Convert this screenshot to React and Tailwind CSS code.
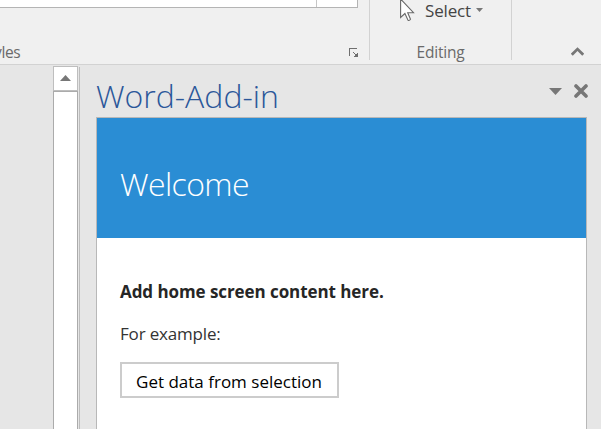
function Ribbon() {
  return (
    <header className="flex h-[65px] shrink-0 overflow-hidden border-b border-[#d2d2d2] bg-[#f0f0f0] text-[#6a6a6a]">
      <section className="flex w-[369px] flex-col">
        <div className="flex h-2 w-[358px] border-r border-b border-[#b4b4b4] bg-white">
          <div className="w-[317px] border-r border-[#c6c6c6]" />
        </div>
        <div className="mt-[33px] flex items-start justify-between pr-[10px]">
          <span className="-ml-[19px] text-[15.5px] leading-[22px] tracking-[-0.45px] whitespace-nowrap">Styles</span>
          <svg width="11" height="11" viewBox="0 0 11 11" className="mt-[7px] translate-x-px" fill="none" stroke="#6f6f6f" shapeRendering="crispEdges">
            <path d="M.5 8V.5H8" />
            <path d="M4 4l3.5 3.5" />
            <path d="M9 4v5H4z" fill="#6f6f6f" stroke="none" />
          </svg>
        </div>
      </section>
      <div className="h-[60px] w-px bg-[#d2d2d2]" />
      <section className="flex w-[141px] flex-col items-center">
        <div className="flex h-[22px] w-full items-start pl-[30px]">
          <svg width="15" height="22" viewBox="0 0 15 22" fill="#fff" stroke="#686868" strokeWidth="1.1">
            <path d="M.6-1V17.4L4.9 13.5 8 20.2Q9.4 21 10.5 19.3L7.7 12.7H13.5L.6-1Z" />
          </svg>
          <span className="ml-[10px] text-[17px] leading-[22px] tracking-[-0.15px] text-[#444]">Select</span>
          <svg width="7" height="4" viewBox="0 0 7 4" className="mt-2 ml-[5px]" fill="#777">
            <path d="M0 0h7L3.5 4z" />
          </svg>
        </div>
        <span className="mt-[19px] text-[15.5px] leading-[22px] tracking-[-0.2px]">Editing</span>
      </section>
      <div className="h-[60px] w-px bg-[#d2d2d2]" />
      <div className="flex flex-1 justify-end pr-[17px]">
        <svg width="13" height="9" viewBox="0 0 13 9" className="mt-[47px]" fill="none" stroke="#777" strokeWidth="2.8">
          <path d="M.8 7.7l5.7-5.6 5.7 5.6" />
        </svg>
      </div>
    </header>
  );
}

function Scrollbar() {
  return (
    <div className="mt-px flex w-[25px] flex-col">
      <div className="flex h-[25px] items-center justify-center border border-[#bebebe] bg-white">
        <svg width="11" height="6" viewBox="0 0 11 6" className="-mt-0.5" fill="#777">
          <path d="M5.5 0L11 6H0z" />
        </svg>
      </div>
      <div className="flex-1 border border-b-0 border-[#ababab] bg-white" />
    </div>
  );
}

function TaskPane() {
  return (
    <aside className="ml-4 flex w-[491px] flex-col">
      <div className="flex h-[52px] justify-between">
        <h1 className="mt-[9px] text-[32px] leading-[44px] font-light whitespace-nowrap text-[#2b579a]">Word-Add-in</h1>
        <div className="mt-[19px] -mr-px flex items-start">
          <svg width="13" height="7" viewBox="0 0 13 7" className="mt-1" fill="#777">
            <path d="M0 0h13L6.5 7z" />
          </svg>
          <svg width="14" height="14" viewBox="0 0 14 14" className="ml-3" fill="none" stroke="#777" strokeWidth="3.6" strokeLinecap="round">
            <path d="M2 2l10 10M12 2L2 12" />
          </svg>
        </div>
      </div>
      <div className="flex flex-1 flex-col border border-b-0 border-[#b8b8b8] bg-white">
        <div className="h-[120px] bg-[#2a8dd4] pt-[44px] pl-[23px]">
          <h2 className="text-[32px] leading-[44px] font-light tracking-[-0.6px] whitespace-nowrap text-white">Welcome</h2>
        </div>
        <main className="flex flex-col items-start pt-[42px] pl-[23px]">
          <p className="text-[17px] leading-6 font-bold tracking-[-0.07px] whitespace-nowrap text-[#262626]">Add home screen content here.</p>
          <p className="mt-[18px] text-[17px] leading-6 tracking-[-0.18px] whitespace-nowrap text-[#333]">For example:</p>
          <button className="mt-4 h-9 w-[219px] border-2 border-[#ccc] bg-white pt-[3px] pr-px text-[17px] leading-6 whitespace-nowrap text-black">
            Get data from selection
          </button>
        </main>
      </div>
    </aside>
  );
}

export default function App() {
  return (
    <div className="flex h-[429px] w-[601px] flex-col overflow-hidden bg-[#e6e6e6] font-['Open_Sans','Noto_Sans',sans-serif]">
      <Ribbon />
      <div className="flex flex-1">
        <div className="w-[53px] shrink-0" />
        <Scrollbar />
        <div className="mt-0.5 ml-px w-px bg-[#bdbdbd]" />
        <TaskPane />
      </div>
    </div>
  );
}
